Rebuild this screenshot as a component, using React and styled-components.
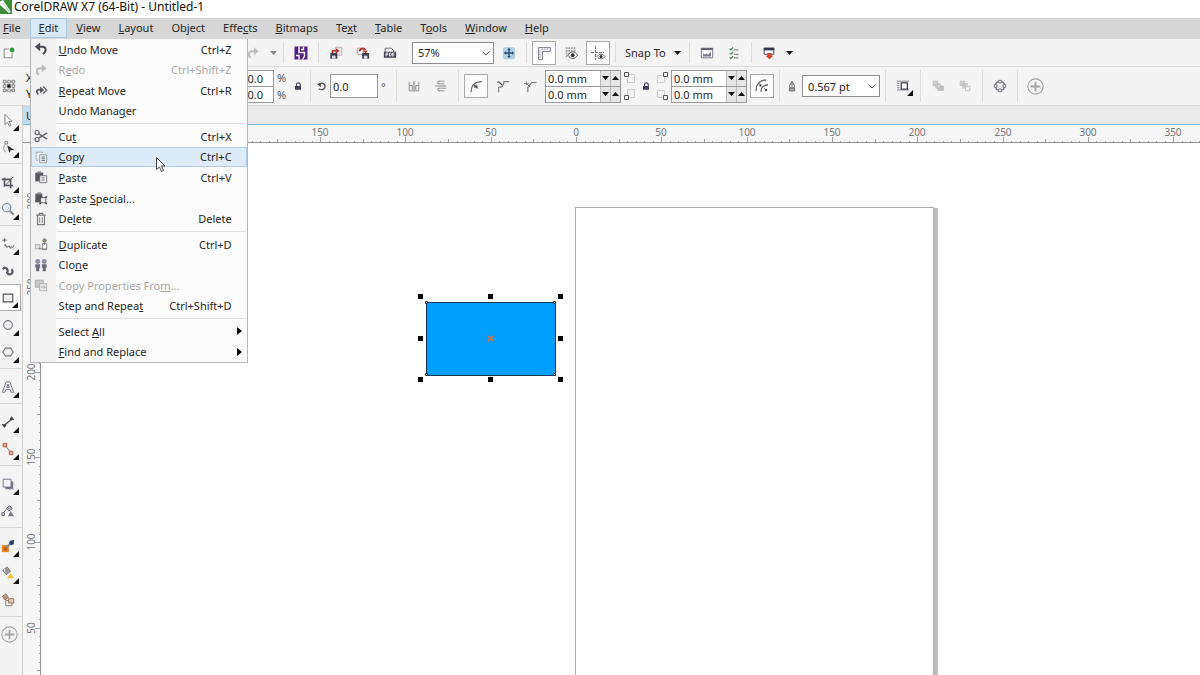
import React, { useState } from 'react';
import styled, { createGlobalStyle, css } from 'styled-components';

const SCALE = 85.3;

const mainMenus = ['&File', '&Edit', '&View', '&Layout', 'Ob&ject', 'Effe&cts', '&Bitmaps', 'Te&xt', '&Table', 'T&ools', '&Window', '&Help'];

const editMenu = [
    [
        { label: '&Undo Move', keys: 'Ctrl+Z', icon: 'undo' },
        { label: 'R&edo', keys: 'Ctrl+Shift+Z', icon: 'redo', disabled: true },
        { label: '&Repeat Move', keys: 'Ctrl+R', icon: 'repeat' },
        { label: 'Undo Mana&ger' },
    ],
    [
        { label: 'Cu&t', keys: 'Ctrl+X', icon: 'cut' },
        { label: '&Copy', keys: 'Ctrl+C', icon: 'copy', active: true },
        { label: '&Paste', keys: 'Ctrl+V', icon: 'paste' },
        { label: 'Paste &Special...', icon: 'pasteSpecial' },
        { label: 'De&lete', keys: 'Delete', icon: 'trash' },
    ],
    [
        { label: '&Duplicate', keys: 'Ctrl+D', icon: 'duplicate' },
        { label: 'Clo&ne', icon: 'clone' },
        { label: 'Copy Properties Fro&m...', icon: 'copyProps', disabled: true },
        { label: 'Step and Repea&t', keys: 'Ctrl+Shift+D' },
    ],
    [
        { label: 'Select &All', sub: true },
        { label: '&Find and Replace', sub: true },
    ],
];

const toolGroups = [
    [{ name: 'Pick', icon: 'pick', flyout: true }, { name: 'Shape', icon: 'shape', flyout: true }],
    [{ name: 'Crop', icon: 'crop', flyout: true }, { name: 'Zoom', icon: 'zoom', flyout: true }],
    [
        { name: 'Freehand', icon: 'freehand', flyout: true },
        { name: 'Artistic media', icon: 'artistic' },
        { name: 'Rectangle', icon: 'rectangle', flyout: true, active: true },
        { name: 'Ellipse', icon: 'ellipse', flyout: true },
        { name: 'Polygon', icon: 'polygon', flyout: true },
    ],
    [{ name: 'Text', icon: 'text', flyout: true }],
    [{ name: 'Dimension', icon: 'dimension', flyout: true }, { name: 'Connector', icon: 'connector', flyout: true }],
    [{ name: 'Drop shadow', icon: 'shadow', flyout: true }, { name: 'Transparency', icon: 'transparency' }],
    [
        { name: 'Color eyedropper', icon: 'eyedropper', flyout: true },
        { name: 'Interactive fill', icon: 'fill', flyout: true },
        { name: 'Smart fill', icon: 'smartFill' },
    ],
    [{ name: 'Add tool', icon: 'plus' }],
];

const icons = {
    undo: <><path d="M5.5 5.5h4c5 0 5 6 .5 8" fill="none" stroke="#484850" strokeWidth="2.2" /><path d="M1 5.500 7 .5v10z" fill="#484850" /></>,
    redo: <><path d="M10 6H7c-4.500 0-5 5-1.500 7.500" fill="none" stroke="#bdbdbd" strokeWidth="2.2" /><path d="M14.500 6 9 1.500v9z" fill="#bdbdbd" /></>,
    repeat: <><path d="M8 7.500H6C2.500 7.500 2.500 11 5 13" fill="none" stroke="#55555d" strokeWidth="2" /><path d="m7 4 4.500 4L7 12z" fill="#55555d" /><path d="m10.500 4 4 4-4 4" fill="none" stroke="#55555d" strokeWidth="1.3" /></>,
    cut: <g fill="none" stroke="#68686e" strokeWidth="1.4"><circle cx="3.500" cy="4" r="2.300" /><circle cx="3.500" cy="12" r="2.300" /><path d="m5.500 5.500 9.500 6M5.500 10.500 15 4.500" strokeWidth="1.800" /></g>,
    copy: <g stroke="#8a949c" fill="#eef3f6"><path d="M2.500 2.500h7v9h-7z" strokeDasharray="2 1" /><path d="M6.500 5.500h8v9h-8z" /><path d="M8.500 8h4M8.500 10h4M8.500 12h4" stroke="#5d6670" /></g>,
    paste: <g><path d="M1.500 3h9v10h-9z" fill="#55555c" /><path d="M4 1.500h4V4H4z" fill="#888" /><path d="M6.500 6.500h8v8h-8z" fill="#f1f1f1" stroke="#707078" /><path d="M8.500 9h4M8.500 11.500h4" stroke="#707078" /></g>,
    pasteSpecial: <g><path d="M1.500 3h8v10h-8z" fill="#55555c" /><path d="M4 1.500h4V4H4z" fill="#888" /><path d="M7.500 7.500h6v6h-6z" fill="#eee" stroke="#55555c" /><path d="M6 6h2v2H6zM13 6h2v2h-2zM6 13h2v2H6zM13 13h2v2h-2z" fill="#444" /></g>,
    trash: <g fill="none" stroke="#77777b"><path d="M2.500 3.500h11M6 3V1.500h4V3M4 4v10.500h8V4" strokeWidth="1.300" /><path d="M6.500 6v6.500M9.500 6v6.500" /></g>,
    duplicate: <g stroke="#777"><path d="M1.500 8.500h5v5h-5z" fill="#ddd" stroke="#aaa" /><path d="M9.500 7.500h5v7h-5z" fill="#fff" /><circle cx="12" cy="4" r="2" fill="#9b8d60" /><path d="M12 6v2.500M5 13.500h9" /></g>,
    clone: <g fill="#6b6b7c"><circle cx="4.300" cy="4" r="2.800" fill="#8e8ea0" /><circle cx="11.700" cy="4" r="2.800" fill="#8e8ea0" /><path d="M1.500 7h5.500v4H6v4H2.500v-4h-1zM9 7h5.500v4h-1v4H10v-4H9z" /></g>,
    copyProps: <g stroke="#aaa" fill="#c8c8c8"><path d="M1.500 2.500h9v8h-9z" /><path d="M6.500 6.500h8v8h-8z" fill="#eaeaea" /><path d="M8 10.500h5M11 8.500l2 2-2 2" fill="none" /></g>,
    newDoc: <g><path d="M8 3.500H2.500v10h9V8" fill="#fff" stroke="#8b8b8b" strokeWidth="1.200" /><circle cx="11.500" cy="4.500" r="2.800" fill="#36973d" /></g>,
    launcher: <g><path d="M1.500 1.500h13v13h-13z" fill="#512080" /><path d="M6 1.500v6h5.500v3.500l-2 3.500M6 14.500V10.500H3M10.500 1.500v3H8" fill="none" stroke="#fff" strokeWidth="1.400" /></g>,
    import: <g><path d="M7.500 1.500h7v9h-7z" fill="#f6eded" stroke="#b5a0a0" /><path d="M1.500 8h8v6.500h-8z" fill="#3c3c4e" /><path d="M3.500 11h4v3.500h-4z" fill="#dedee8" /><path d="M4 8V5.500h4" fill="none" stroke="#b92b25" strokeWidth="1.800" /><path d="m8 2.500 4 3-4 3z" fill="#b92b25" /></g>,
    export: <g><path d="M1.500 2.500h7v7h-7z" fill="#f6eded" stroke="#b39999" /><path d="M7 8h8v6.500H7z" fill="#3c3c4e" /><path d="M9 11h4v3.500H9z" fill="#dedee8" /><path d="M4 6c1-4 5-4 7-1" fill="none" stroke="#b92b25" strokeWidth="2" /><path d="M8.500 5.500h5L11 8.500z" fill="#b92b25" /></g>,
    pdf: <g><path d="M2.500 8V2.500h7L12 5v3" fill="#fff" stroke="#55555f" /><path d="M1 6.500h14v7H1z" fill="#474756" /><path d="M3.500 12V8h2v2h-2M7.500 8v3.500h1c1.500 0 1.500-3.500 0-3.500zM11 12V8h2M11 10h2" fill="none" stroke="#fff" /></g>,
    fullScreen: <g><rect x="1" y="1" width="14" height="14" rx="3" fill="#b5d0e2" /><path d="M8 4v8M4 8h8" stroke="#214b6e" strokeWidth="1.500" /><path d="m8 2 2 2.500H6zM8 14l2-2.500H6zM2 8l2.500-2v4zM14 8l-2.500-2v4z" fill="#214b6e" /></g>,
    rulers: <g><path d="M2.500 2.500h12v4h-8v8h-4z" fill="#e9e9ee" stroke="#8a8a98" /><path d="M6.500 3v2M9 3v2M11.500 3v2M3 7h2M3 9.500h2M3 12h2" stroke="#b8b8c2" /></g>,
    grid: <g><path d="M2 2.500h11M2 5.500h11M2 8.500h4M2 11.500h3" stroke="#999" strokeDasharray="2 1" strokeWidth="2" /><path d="M4.500 10.500c3-5 8-5 11 0-3 5-8 5-11 0z" fill="#fff" stroke="#444" /><circle cx="10" cy="10.500" r="2.200" fill="#333" /></g>,
    guides: <g><path d="M5.500 1v14M1 7.500h13" stroke="#777" strokeDasharray="3 1" /><path d="M7 11.500c2-3 6-3 8 0-2 3-6 3-8 0z" fill="#fff" stroke="#666" /><circle cx="11" cy="11.500" r="1.500" fill="#333" /></g>,
    options: <g><path d="M1.500 2.500h13v11h-13z" fill="#fff" stroke="#66667a" /><path d="M1.500 3.500h13" stroke="#555568" strokeWidth="2" /><path d="M3.500 12V8l2 2 2-1.500 2 1.500 3-4v6z" fill="#77778d" /></g>,
    checklist: <g fill="none"><path d="m3 3 1.500 1.500L7 1.500M3 8l1.500 1.500L7 6.500M3 13l1.500 1.500L7 11.500" stroke="#3a7e46" strokeWidth="1.200" /><path d="M8 4.500h5M8 9.500h5M8 13.500h5" stroke="#888" strokeWidth="1.500" /></g>,
    presentation: <g><path d="M2.500 2.500h11v7h-11z" fill="#fff" stroke="#333750" /><path d="M2 3.500h12" stroke="#333750" strokeWidth="3" /><path d="M6 8h5v3h2l-4.500 4L4 11h2z" fill="#d3442d" /></g>,
    origin: <g fill="none" stroke="#777"><path d="M3 3h10v10H3z" strokeDasharray="2 1" /><path d="M1.500 1.500h3v3h-3zM6.500 1.500h3v3h-3zM11.500 1.500h3v3h-3zM1.500 6.500h3v3h-3zM11.500 6.500h3v3h-3zM1.500 11.500h3v3h-3zM6.500 11.500h3v3h-3zM11.500 11.500h3v3h-3z" fill="#fff" /><path d="M6 6h4v4H6z" fill="#222" stroke="none" /></g>,
    lock: <g><path d="M6 8V6c0-3 5-3 5 0v2" fill="none" stroke="#47475c" strokeWidth="1.500" /><path d="M4 8h8v5H4z" fill="#3f3f55" /></g>,
    rotate: <><path d="M4 5c4-4 10-1 9 4-1 4-6 5-9 2" fill="none" stroke="#444" strokeWidth="1.700" /><path d="M1 4h6v5z" fill="#444" /></>,
    mirrorH: <g fill="none" stroke="#858585"><path d="M2.500 3v10.500h3.500V7.500h-3M13.500 3v10.500H10V7.500h3.500" /><path d="M8 2v13" stroke="#666" /></g>,
    mirrorV: <g fill="none" stroke="#858585"><path d="M12 5.500H4.500V2.500H12M14 10.500H4.500v3H12" /><path d="M1 8h13" stroke="#777" /></g>,
    roundCorner: <g fill="none" stroke="#666"><path d="M2.500 15C2.500 7 6 3 15 3" strokeWidth="1.300" /><path d="M6 7l4 4M6 7h3M6 7v3" stroke="#444" /><circle cx="8.500" cy="9" r="1.500" fill="#555" stroke="none" /></g>,
    scallop: <g fill="none" stroke="#777"><path d="M3 15V9.500c4 0 6-2 6-6.500h6" strokeWidth="1.300" /><path d="M1.500 3.500h2.500M4 4l3 3" stroke="#444" strokeWidth="1.500" /></g>,
    chamfer: <g fill="none" stroke="#777"><path d="M5.500 15V9.500L10 4h5.500" strokeWidth="1.300" /><path d="M1 5h6M4 3v4" /><path d="m5 6 3 3" stroke="#444" /></g>,
    relative: <g fill="none" stroke="#666"><path d="M2 13C2 6 6 2 12 2M7 14c0-4 2-7 7-7" strokeWidth="1.300" /><path d="M5.500 6.500h2v2h-2zM11 11h2v2h-2z" fill="#333" stroke="none" /><path d="m4.500 5 2 2M10 10l2 2" /></g>,
    pen: <g fill="none" stroke="#55555b"><path d="M8 1.500 5 6.500v4h6v-4zM8 3v5" fill="#d8d8da" /><path d="M4.500 11h7v3.500h-7z" fill="#aaa" /></g>,
    wrap: <g><path d="M1 2.500h14M1 5h3M1 7.500h3M1 10h3M1 12.500h14" stroke="#777784" /><path d="M6 4.500h7v7H6z" fill="#fff" stroke="#444453" strokeWidth="1.500" /></g>,
    toFront: <g fill="#d2d2d2" stroke="#bbb"><path d="M8 8h6v5H8z" fill="#bbb" /><path d="M2.500 2.500h5v5h-5zM5.500 5.500h5v5h-5z" /></g>,
    toBack: <g fill="#d2d2d2" stroke="#bbb"><path d="M2.500 2.500h5v5h-5zM5.500 5.500h5v5h-5z" /><path d="M8.500 8.500h5v5h-5z" fill="#f2f2f2" /></g>,
    curves: <g fill="#fff" stroke="#666670"><circle cx="8" cy="8" r="5.500" fill="none" strokeWidth="1.400" /><path d="M6.500 1.500h3v3h-3zM6.500 11.500h3v3h-3zM1.500 6.500h3v3h-3zM11.500 6.500h3v3h-3z" /></g>,
    plus: <g fill="none" stroke="#a3a3a3"><circle cx="8" cy="8" r="7.200" /><path d="M8 3.500v9M3.500 8h9" strokeWidth="1.700" /></g>,
    pick: <path d="m4.500 1.500 8 8-3.500.3 2.500 4-2 1.200-2.300-4.200-2.700 2.400z" fill="#fafafa" stroke="#77777c" />,
    shape: <g><path d="M5 14C1 9 4 5 7 3" fill="none" stroke="#8a8a8f" /><path d="M4.500 1.500h3v3h-3z" fill="#fff" stroke="#77777c" /><path d="m7 6 8 5-4 .8-1.500 3z" fill="#303036" /></g>,
    crop: <g fill="none" stroke="#55555c" strokeWidth="1.800"><path d="M4 3v9h10M1 5h10v10" /><path d="M3 14 14 2" strokeWidth="1" /></g>,
    zoom: <g fill="none" stroke="#8a8a90"><circle cx="6.500" cy="6.500" r="4.800" fill="#e4ebf2" strokeWidth="1.300" /><path d="m10 10 4.500 4.500" strokeWidth="2.600" /></g>,
    freehand: <g fill="none" stroke="#77777d" strokeWidth="1.300"><path d="M4 1v5M1.500 3.500h5M4 10c1-4 2 4 4 1s2 4 3 1 2 3 4-3" /></g>,
    artistic: <path d="M2 6c3-4 7 0 5 4 4 5 8-1 5-4" fill="none" stroke="#55555e" strokeWidth="2.400" />,
    rectangle: <path d="M2.500 3.500h11v9h-11z" fill="#f0f0f0" stroke="#55555d" strokeWidth="1.300" />,
    ellipse: <circle cx="8" cy="8" r="5" fill="#eee" stroke="#77777f" strokeWidth="1.300" />,
    polygon: <path d="m5 3.500 6 0 3 4.500-3 4.500H5L2 8z" fill="#eee" stroke="#77777f" strokeWidth="1.300" />,
    text: <path d="M1.500 14 6 2h4l4.500 12h-3l-1-3h-5l-1 3zM6.500 8.500h3L8 4.500z" fill="#f3f3f5" stroke="#696974" fillRule="evenodd" />,
    dimension: <g stroke="#44444a" fill="#44444a"><path d="M3 12.500 13 4" strokeWidth="1.500" /><path d="m1.500 10.500 3 3.500M11.500 2l3 3.500" strokeWidth="1.500" /><circle cx="4" cy="12" r="1.300" /><circle cx="12" cy="4.500" r="1.300" /></g>,
    connector: <g fill="#e7b297" stroke="#a0502c"><path d="m5 4 6 8" fill="none" stroke="#99685a" /><path d="M2.500 1.500h4v4h-4zM9.500 10.500h4v4h-4z" /></g>,
    shadow: <g><path d="M5 5h9v9H5z" fill="#77778a" /><path d="M2.500 2.500h9v9h-9z" fill="#f2f2f7" stroke="#66667c" /></g>,
    transparency: <g stroke="#66666f"><path d="m6 5 4-3 3 3-4 3z" fill="#aaaabb" /><path d="m6 6-4 5" /><path d="M1 10h3v3H1z" fill="#ccc" /><path d="m11 8 4 6H8z" fill="#77778d" stroke="none" /></g>,
    eyedropper: <g><path d="M1 7h8v8H1z" fill="#e98220" /><path d="M3 9h4v4H3z" fill="#c65d17" /><path d="m6 10 6-6" stroke="#77909c" strokeWidth="2.500" /><path d="m10 2 5-1-.500 5-3 1-2-2z" fill="#273f68" /></g>,
    fill: <g><path d="m2 5 5-4 4 5-5 4z" fill="#a09a9a" stroke="#79706f" /><path d="M4 3v4" stroke="#fff" /><path d="m11 8 4 6H7z" fill="#efbd38" /></g>,
    smartFill: <g stroke="#826650"><path d="m1.500 4 4-3 3 4-4 3z" fill="#b69c88" /><path d="M5.500 8.500h7v6h-7z" fill="#fff" /><path d="M8.500 6.500h6v5h-6z" fill="#dfc8ad" /></g>,
};

function Icon({ name, size = 14 }) {
    return <svg width={size} height={size} viewBox="0 0 16 16" aria-hidden="true">{icons[name]}</svg>;
}

function Mnemonic({ text }) {
    const i = text.indexOf('&');
    if (i < 0) return <span>{text}</span>;
    return <span>{text.slice(0, i)}<u>{text[i + 1]}</u>{text.slice(i + 2)}</span>;
}

function Tool({ label, icon, size, boxed, disabled }) {
    return (
        <ToolButton type="button" aria-label={label} $boxed={boxed} disabled={disabled}>
            <Icon name={icon} size={size} />
        </ToolButton>
    );
}

function Triangle({ up, color = '#111' }) {
    return (
        <svg width="7" height="4" viewBox="0 0 7 4" aria-hidden="true">
            <path d={up ? 'M0 4h7L3.500 0z' : 'M0 0h7L3.500 4z'} fill={color} />
        </svg>
    );
}

function Combo({ label, value, width }) {
    return (
        <ComboBox $width={width}>
            <select aria-label={label} defaultValue={value}>
                <option>{value}</option>
            </select>
            <svg width="8" height="5" viewBox="0 0 8 5" aria-hidden="true">
                <path d="m.5.5 3.500 3.500L7.500.5" fill="none" stroke="#555" />
            </svg>
        </ComboBox>
    );
}

function Spinner({ label }) {
    const [value, setValue] = useState('0.0 mm');
    return (
        <SpinBox>
            <input aria-label={label} value={value} onChange={(e) => setValue(e.target.value)} />
            <button type="button" aria-label={`Decrease ${label}`}><Triangle /></button>
            <button type="button" aria-label={`Increase ${label}`}><Triangle up /></button>
        </SpinBox>
    );
}

function Corners({ right }) {
    const x = right ? 7.5 : 0.5;
    return (
        <svg width="12" height="28" viewBox="0 0 12 28" aria-hidden="true">
            <path d={right ? 'M1.500 10.500V3.500h6M1.500 10.500h7v-5' : 'M3.500 10.500h7V2.500h-6M3.500 10.500v-5'} fill="none" stroke="#ccc" />
            <path d={right ? 'M1.500 18.500h7v5M1.500 18.500v7h6' : 'M3.500 23v-5.500h7v8h-6'} fill="none" stroke="#ccc" />
            <path d={`M${x} .5h4v4h-4zM${x} 23.500h4v4h-4z`} fill="#fff" stroke="#555" />
        </svg>
    );
}

// ruler units run every 5mm, with a label every 50
function Ruler({ vertical, from, to }) {
    const ticks = [];
    for (let v = from - 45; v <= to + 45; v += 5) {
        ticks.push(v);
    }
    const pos = (v) => (vertical ? 713 - 143 - (v * SCALE) / 50 : 576 - 23 + (v * SCALE) / 50);
    const length = (v) => (v % 50 === 0 ? 5 : v % 25 === 0 ? 3 : 1);
    return (
        <RulerSvg $vertical={vertical} aria-hidden="true">
            {ticks.map((v) => {
                const p = Math.round(pos(v)) + 0.5;
                const l = length(v);
                return <path key={v} d={vertical ? `M${17 - l} ${p}h${l}` : `M${p} ${17 - l}v${l}`} />;
            })}
            {ticks.filter((v) => v % 50 === 0).map((v) => {
                const p = Math.round(pos(v));
                return vertical
                    ? <text key={v} transform={`translate(12 ${p}) rotate(-90)`}>{Math.abs(v)}</text>
                    : <text key={v} x={p} y="11">{Math.abs(v)}</text>;
            })}
        </RulerSvg>
    );
}

export default function App() {
    const [open, setOpen] = useState(true);

    return (
        <Window>
            <GlobalStyle />
            <TitleBar>
                <svg width="13" height="14" viewBox="0 0 13 14" aria-hidden="true">
                    <path d="M0 0h12v14H0z" fill="#3c8c3a" />
                    <path d="M0 1.500 3 0l8 12-2 1L0 5z" fill="#fff" />
                    <path d="m3 3 6 8" stroke="#a7cfa3" />
                </svg>
                <h1>CorelDRAW X7 (64-Bit) - Untitled-1</h1>
            </TitleBar>
            <MenuBar>
                {mainMenus.map((m) => (
                    <MenuItem key={m}>
                        <MenuButton type="button" $open={open && m === '&Edit'} onClick={() => setOpen(m === '&Edit' && !open)}>
                            <Mnemonic text={m} />
                        </MenuButton>
                        {open && m === '&Edit' && (
                            <Dropdown>
                                {editMenu.map((section, i) => (
                                    <Section key={i}>
                                        {section.map((item) => (
                                            <Entry key={item.label} type="button" $active={item.active} disabled={item.disabled}>
                                                <Gutter>{item.icon && <Icon name={item.icon} />}</Gutter>
                                                <Mnemonic text={item.label} />
                                                <Keys>{item.keys}</Keys>
                                                {item.sub && <svg width="5" height="8" viewBox="0 0 5 8" aria-hidden="true"><path d="M0 0v8l5-4z" /></svg>}
                                            </Entry>
                                        ))}
                                    </Section>
                                ))}
                            </Dropdown>
                        )}
                    </MenuItem>
                ))}
            </MenuBar>
            <ToolBar>
                <Lead $width={238}><Icon name="newDoc" /></Lead>
                <Tool label="Redo" icon="redo" />
                <ArrowButton type="button" aria-label="Redo history"><Triangle color="#888" /></ArrowButton>
                <Divider />
                <Tool label="Search content" icon="launcher" size={16} />
                <Divider />
                <Tool label="Import" icon="import" />
                <Tool label="Export" icon="export" />
                <Tool label="Publish to PDF" icon="pdf" />
                <Spacer />
                <Combo label="Zoom level" value="57%" width={82} />
                <Tool label="Full-screen preview" icon="fullScreen" />
                <Divider />
                <Tool label="Show rulers" icon="rulers" size={16} boxed />
                <Tool label="Show grid" icon="grid" />
                <Tool label="Show guidelines" icon="guides" size={16} boxed />
                <Divider />
                <SnapButton type="button">Snap To <Triangle /></SnapButton>
                <Divider />
                <Tool label="Options" icon="options" />
                <Tool label="Object manager" icon="checklist" />
                <Divider />
                <Tool label="Application launcher" icon="presentation" />
                <ArrowButton type="button" aria-label="More applications"><Triangle /></ArrowButton>
            </ToolBar>
            <PropertyBar>
                <Lead $width={223}>
                    <Icon name="origin" />
                    <Axis><span>X:</span><span>Y:</span></Axis>
                </Lead>
                <Stack $width={48}>
                    <Field aria-label="Scale X" defaultValue="100.0" />
                    <Field aria-label="Scale Y" defaultValue="100.0" />
                </Stack>
                <Unit $width={11}><span>%</span><span>%</span></Unit>
                <Small><Icon name="lock" size={12} /></Small>
                <Divider />
                <Icon name="rotate" size={11} />
                <AngleField aria-label="Angle of rotation" defaultValue="0.0" />
                <Unit $width={10}><span>°</span></Unit>
                <Divider />
                <Tool label="Mirror horizontally" icon="mirrorH" />
                <Tool label="Mirror vertically" icon="mirrorV" />
                <Divider />
                <Tool label="Round corner" icon="roundCorner" boxed />
                <Tool label="Scalloped corner" icon="scallop" />
                <Tool label="Chamfered corner" icon="chamfer" />
                <Stack $width={76}>
                    <Spinner label="Top left radius" />
                    <Spinner label="Bottom left radius" />
                </Stack>
                <Corners />
                <Small><Icon name="lock" size={12} /></Small>
                <Corners right />
                <Stack $width={76}>
                    <Spinner label="Top right radius" />
                    <Spinner label="Bottom right radius" />
                </Stack>
                <Tool label="Relative corner scaling" icon="relative" size={16} boxed />
                <Divider />
                <Small><Icon name="pen" size={12} /></Small>
                <Combo label="Outline width" value="0.567 pt" width={78} />
                <Divider />
                <ToolButton type="button" aria-label="Wrap text">
                    <Icon name="wrap" />
                    <Flyout />
                </ToolButton>
                <Divider />
                <Tool label="To front of layer" icon="toFront" disabled />
                <Tool label="To back of layer" icon="toBack" disabled />
                <Divider />
                <Tool label="Convert to curves" icon="curves" />
                <Divider />
                <Tool label="Quick customize" icon="plus" size={17} />
            </PropertyBar>
            <Workspace>
                <Toolbox>
                    {toolGroups.map((group, i) => (
                        <ToolGroup key={i}>
                            {group.map((t) => (
                                <SideTool key={t.name} type="button" aria-label={t.name} $active={t.active}>
                                    <Icon name={t.icon} size={t.icon === 'plus' ? 17 : 14} />
                                    {t.flyout && <Flyout />}
                                </SideTool>
                            ))}
                        </ToolGroup>
                    ))}
                </Toolbox>
                <Document>
                    <Tabs><Tab type="button">Untitled-1</Tab></Tabs>
                    <Ruler from={-150} to={350} />
                    <Drawing>
                        <Ruler vertical from={50} to={300} />
                        <Canvas>
                            <Page />
                            <Selection>
                                <Shape />
                                <svg width="145" height="88" viewBox="0 0 145 88" aria-hidden="true">
                                    {[0, 70, 140].map((x) => [0, 42, 83].map((y) => (
                                        (x === 70 && y === 42) ? null : <rect key={`${x}-${y}`} x={x} y={y} width="5" height="5" />
                                    )))}
                                    <path d="M7.500 7.500h2v2h-2zM135.500 7.500h2v2h-2zM7.500 79.500h2v2h-2zM135.500 79.500h2v2h-2z" fill="#fff" stroke="#333" />
                                    <path d="m70 42 5 5m0-5-5 5" stroke="#c8734f" strokeWidth="2" />
                                </svg>
                            </Selection>
                        </Canvas>
                    </Drawing>
                </Document>
            </Workspace>
            <Pointer width="10" height="16" viewBox="0 0 10 16" aria-hidden="true">
                <path d="M.5.500v12l3-2.500 2 4.500 2-1-2-4.500h3.500z" fill="#fff" stroke="#444" />
            </Pointer>
        </Window>
    );
}

const GlobalStyle = createGlobalStyle`
  * { box-sizing: border-box; }
  body {
    margin: 0;
    overflow: hidden;
    font-family: "Noto Sans", "Open Sans", sans-serif;
    font-size: 11px;
    color: #262626;
  }
  button, input, select {
    font: inherit;
    color: inherit;
    margin: 0;
    padding: 0;
    border: 0;
    background: none;
    border-radius: 0;
  }
  svg { flex: none; display: block; }
  u { text-underline-offset: 1px; }
`;

const Window = styled.div`
  position: relative;
  display: flex;
  flex-direction: column;
  height: 100vh;
  background: #fff;
`;

const TitleBar = styled.header`
  display: flex;
  align-items: center;
  gap: 1px;
  height: 18px;
  flex: none;
  padding-bottom: 4px;
  h1 {
    margin: 0;
    font-size: 12px;
    line-height: 14px;
    font-weight: 400;
    color: #111;
  }
`;

const MenuBar = styled.nav`
  display: flex;
  flex: none;
  height: 21px;
  padding-bottom: 1px;
  margin-left: -6px;
  background: #d6d6d6;
`;

const MenuItem = styled.div`
  position: relative;
  display: flex;
`;

const MenuButton = styled.button`
  padding: 0 8px;
  border: 1px solid ${(p) => (p.$open ? '#a8c8e4' : 'transparent')};
  background: ${(p) => (p.$open ? '#d9e8f6' : 'transparent')};
  line-height: 18px;
`;

const Dropdown = styled.div`
  position: absolute;
  z-index: 5;
  top: 21px;
  left: 0;
  width: 218px;
  background: linear-gradient(to right, #f1f1f1 25px, #fcfcfc 25px);
  border: 1px solid #b4b8bc;
  border-top: 0;
`;

const Section = styled.div`
  display: grid;
  grid-auto-rows: 1fr;
  height: 82px;
  &:nth-child(2) { height: 103px; }
  &:last-child { height: 41px; }
  & + & {
    margin-top: 5px;
    position: relative;
  }
  & + &::before {
    content: '';
    position: absolute;
    top: -3px;
    left: 26px;
    right: 1px;
    height: 1px;
    background: #dedede;
  }
`;

const Entry = styled.button`
  display: flex;
  align-items: center;
  padding-right: 5px;
  text-align: left;
  white-space: nowrap;
  ${(p) => p.$active && css`
    background: #dcebf7;
    box-shadow: inset 0 0 0 1px #aecde4;
  `}
  &:disabled { color: #a9a9a9; }
`;

const Gutter = styled.span`
  display: flex;
  width: 28px;
  padding-left: 3px;
`;

const Keys = styled.span`
  margin-left: auto;
  padding-right: 10px;
`;

const Bar = styled.div`
  display: flex;
  align-items: center;
  gap: 3px;
  flex: none;
  background: #f4f4f4;
  border-bottom: 1px solid #d9d9d9;
`;

const ToolBar = styled(Bar)`
  height: 28px;
`;

const PropertyBar = styled(Bar)`
  height: 39px;
`;

const Lead = styled.div`
  display: flex;
  align-items: center;
  gap: 10px;
  flex: none;
  width: ${(p) => p.$width}px;
  padding-left: 2px;
`;

const Axis = styled.div`
  display: grid;
  line-height: 16px;
`;

const Divider = styled.span`
  flex: none;
  align-self: stretch;
  width: 1px;
  margin: 3px 2px;
  background: #d9d9d9;
`;

const Spacer = styled.span`
  width: 4px;
`;

const ToolButton = styled.button`
  position: relative;
  display: flex;
  flex: none;
  align-items: center;
  justify-content: center;
  width: 24px;
  height: 24px;
  ${(p) => p.$boxed && css`
    background: #fdfdfd;
    border: 1px solid #a8a8a8;
  `}
`;

const ArrowButton = styled.button`
  display: flex;
  justify-content: center;
  width: 10px;
`;

const SnapButton = styled.button`
  display: flex;
  align-items: center;
  justify-content: space-between;
  width: 63px;
  padding: 0 3px 0 4px;
  white-space: nowrap;
`;

const ComboBox = styled.div`
  position: relative;
  flex: none;
  width: ${(p) => p.$width}px;
  height: 22px;
  select {
    appearance: none;
    width: 100%;
    height: 100%;
    padding-left: 5px;
    border: 1px solid #8c8c8c;
    background: #fff;
  }
  svg {
    position: absolute;
    right: 4px;
    top: 9px;
    pointer-events: none;
  }
`;

const Stack = styled.div`
  display: grid;
  grid-template-columns: minmax(0, 1fr);
  flex: none;
  width: ${(p) => p.$width}px;
`;

const Field = styled.input`
  width: 100%;
  height: 17px;
  padding-right: 10px;
  text-align: right;
  border: 1px solid #999;
  background: #fff;
  & + & {
    height: 16px;
    border-top: 0;
  }
`;

const AngleField = styled(Field)`
  width: 48px;
  height: 24px;
  padding-left: 2px;
  text-align: left;
`;

const SpinBox = styled.div`
  display: flex;
  height: 17px;
  border: 1px solid #999;
  background: #fff;
  & + & {
    height: 16px;
    border-top: 0;
  }
  input {
    flex: 1;
    min-width: 0;
    padding-left: 2px;
  }
  button {
    display: flex;
    flex: none;
    align-items: center;
    justify-content: center;
    width: 10px;
    background: #e6e6e6;
    border-left: 1px solid #bbb;
  }
`;

const Unit = styled.div`
  display: grid;
  width: ${(p) => p.$width}px;
  line-height: 17px;
  color: #555;
`;

const Small = styled.span`
  display: flex;
  justify-content: center;
  width: 14px;
`;

const Flyout = styled.span`
  position: absolute;
  right: 2px;
  bottom: 2px;
  border-left: 6px solid transparent;
  border-bottom: 6px solid #111;
`;

const Workspace = styled.main`
  display: flex;
  flex: 1;
  min-height: 0;
`;

const Toolbox = styled.aside`
  flex: none;
  width: 23px;
  background: #f4f4f4;
  border-right: 1px solid #cfcfcf;
`;

const ToolGroup = styled.div`
  & + & {
    margin-top: 3px;
    padding-top: 4px;
    border-top: 1px solid #d6d6d6;
  }
`;

const SideTool = styled.button`
  position: relative;
  display: flex;
  align-items: center;
  width: 21px;
  height: 27px;
  padding-left: 1px;
  ${(p) => p.$active && css`
    background: #fdfdfd;
    border: 1px solid #aaa;
    border-left: 0;
  `}
`;

const Document = styled.div`
  display: flex;
  flex: 1;
  flex-direction: column;
  min-width: 0;
`;

const Tabs = styled.div`
  display: flex;
  flex: none;
  height: 19px;
  background: #e9e9e9;
  border-bottom: 1px solid #6fb6d8;
`;

const Tab = styled.button`
  padding: 0 3px;
  background: #bfdef2;
`;

const RulerSvg = styled.svg`
  width: ${(p) => (p.$vertical ? '18px' : '100%')};
  height: ${(p) => (p.$vertical ? '100%' : '18px')};
  background: #f6f6f6;
  border: 0 solid #929292;
  border-width: ${(p) => (p.$vertical ? '0 1px 0 0' : '0 0 1px 0')};
  path { stroke: #a4a4a4; }
  text {
    font-size: 10px;
    text-anchor: middle;
    fill: #777;
  }
`;

const Drawing = styled.div`
  display: flex;
  flex: 1;
  min-height: 0;
`;

const Canvas = styled.div`
  position: relative;
  flex: 1;
  overflow: hidden;
  background: #fff;
`;

const Page = styled.div`
  position: absolute;
  left: 534px;
  top: 64px;
  width: 359px;
  height: 508px;
  border: 1px solid #aaa;
  box-shadow: 4px 1px 0 #bdbdbd;
`;

const Selection = styled.div`
  position: absolute;
  left: 377px;
  top: 151px;
  svg { position: relative; }
`;

const Shape = styled.div`
  position: absolute;
  left: 8px;
  top: 8px;
  width: 130px;
  height: 74px;
  background: #009ffb;
  border: 1px solid #123a58;
`;

const Pointer = styled.svg`
  position: absolute;
  z-index: 6;
  left: 156px;
  top: 157px;
`;
